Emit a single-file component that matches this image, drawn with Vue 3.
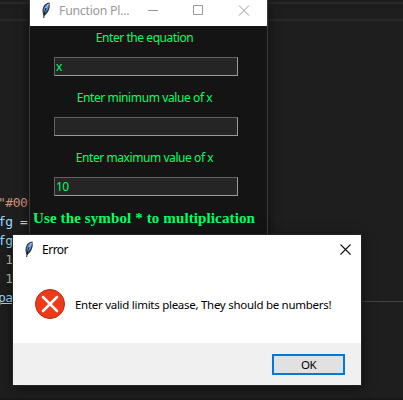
<script setup>
const codeLines = [
  { text: '"#00', kind: 'string', tail: 'f' },
  { text: 'fg ', kind: 'name', tail: '=' },
  { text: 'fg', kind: 'name' },
  { text: ' 1', kind: 'number' },
  { text: ' 1', kind: 'number' },
  { text: 'pa', kind: 'name underlined' },
]
const fields = [
  { label: 'Enter the equation', value: 'x', size: 'short' },
  { label: 'Enter minimum value of x', value: '', size: 'medium' },
  { label: 'Enter maximum value of x', value: '10', size: 'long' },
]
</script>

<template>
  <div class="desktop">
    <div class="rule first"></div>
    <div class="rule second"></div>
    <div class="rule panel"></div>
    <div class="rule bottom"></div>
    <div class="code">
      <div v-for="(line, i) in codeLines" :key="i" class="line" :class="line.kind">{{ line.text }}<span v-if="line.tail" :class="{ operator: line.tail === '=' }">{{ line.tail }}</span></div>
    </div>

    <section class="plotter">
      <header class="plot-head">
        <svg class="feather" width="10" height="17" viewBox="0 0 10 17">
          <path d="M3 14C.4 10 1.5 5 4 2.500Q6 .5 8.500.500Q9.500 5 7.500 9Q6 12 3 14Z" fill="#26303c" />
          <path d="M3 11C2 8 3 5 5 3Q6.500 1.500 8 1.500Q8.200 5 6.500 8Q5 10.500 3 11Z" fill="#5b94dc" />
          <path d="M7.500 2Q4 6 3.200 11" stroke="#b9d5f5" stroke-width=".9" fill="none" />
          <path d="M5 6Q3 10 2.700 16" stroke="#10141a" stroke-width="1" fill="none" />
        </svg>
        <span class="plot-title">Function Pl...</span>
        <svg class="controls" width="104" height="12" viewBox="0 0 104 12" fill="none" stroke="#999">
          <path d="M0 5.500H10M45.500.500H54.500V9.500H45.500ZM91 .500L101 10.500M101 .500L91 10.500" />
        </svg>
      </header>
      <div class="form">
        <div v-for="field in fields" :key="field.label" class="field">
          <div class="label" :class="field.size"><span>{{ field.label }}</span></div>
          <div class="entry">{{ field.value }}</div>
        </div>
        <div class="hint">Use the symbol * to multiplication</div>
      </div>
    </section>

    <section class="dialog">
      <header class="dialog-head">
        <svg class="feather" width="10" height="17" viewBox="0 0 10 17">
          <path d="M3 14C.4 10 1.5 5 4 2.500Q6 .5 8.500.500Q9.500 5 7.500 9Q6 12 3 14Z" fill="#26303c" />
          <path d="M3 11C2 8 3 5 5 3Q6.500 1.500 8 1.500Q8.200 5 6.500 8Q5 10.500 3 11Z" fill="#5b94dc" />
          <path d="M7.500 2Q4 6 3.200 11" stroke="#b9d5f5" stroke-width=".9" fill="none" />
          <path d="M5 6Q3 10 2.700 16" stroke="#10141a" stroke-width="1" fill="none" />
        </svg>
        <span class="dialog-title">Error</span>
        <svg class="close" width="11" height="11" viewBox="0 0 11 11" fill="none" stroke="#111" stroke-width="1.100">
          <path d="M.5.500L10.500 10.500M10.500.500L.5 10.500" />
        </svg>
      </header>
      <div class="message">
        <svg width="30" height="30" viewBox="0 0 30 30">
          <circle cx="15" cy="15" r="14.500" fill="#f03a17" stroke="#a92c1a" />
          <path d="M8 8L22 22M22 8L8 22" stroke="#fff" stroke-width="2.500" stroke-linecap="round" />
        </svg>
        <span class="message-text">Enter valid limits please, They should be numbers!</span>
      </div>
      <footer class="actions"><button class="ok">OK</button></footer>
    </section>
  </div>
</template>

<style>
body { margin: 0; overflow: hidden; background: #1e1e1e; }
</style>

<style scoped>
.desktop {
  position: relative;
  width: 403px;
  height: 400px;
  overflow: hidden;
  background: #1e1e1e;
  font-family: "Noto Sans", sans-serif;
  font-size: 12px;
}
.rule { position: absolute; left: 0; width: 403px; height: 2px; background: #282828; }
.first { top: 2px; }
.second { top: 19px; }
.panel { top: 301px; left: 361px; height: 1px; background: #414141; }
.bottom { top: 398px; background: #181616; }
.code {
  position: absolute;
  left: -2px;
  top: 193px;
  font: 13px/19px "DejaVu Sans Mono", monospace;
  letter-spacing: -0.5px;
  white-space: pre;
}
.line { height: 19px; }
.string { color: #ce9178; }
.name { color: #9cdcfe; }
.number { color: #b5cea8; }
.operator { color: #d4d4d4; }
.underlined { text-decoration: underline; text-decoration-thickness: 1px; text-underline-offset: 1px; }
.plotter {
  position: absolute;
  left: 29px;
  top: 0;
  width: 237px;
  height: 240px;
  border: solid #3b3b3b;
  border-width: 0 1px;
  background: #141414;
  box-shadow: 0 2px 10px #0008;
}
.plot-head {
  box-sizing: border-box;
  display: flex;
  height: 26px;
  padding: 1px 0 0 11px;
  background: #fff;
}
.plot-title { width: 83px; margin-left: 8px; line-height: 20px; color: #999; letter-spacing: -0.25px; font-size: 12.3px; white-space: nowrap; }
.feather { margin-top: 1px; }
.controls { margin: 4px 0 0 6px; }
.form { color: #00ff66; }
.field { height: 60px; }
.label { height: 31px; line-height: 23px; text-align: center; white-space: nowrap; }
.label span { margin-right: 8px; }
.short { letter-spacing: -0.44px; }
.medium { letter-spacing: -0.4px; }
.long { letter-spacing: -0.43px; }
.entry {
  box-sizing: border-box;
  width: 184px;
  height: 19px;
  margin-left: 24px;
  padding-left: 1px;
  border: 1px solid #606060;
  border-right-color: #999;
  border-bottom-color: #999;
  background: #252525;
  line-height: 18px;
  letter-spacing: -0.6px;
}
.hint {
  padding-left: 3px;
  font: bold 15px/24px "Liberation Serif", serif;
  letter-spacing: 0.12px;
  white-space: nowrap;
}
.dialog {
  position: absolute;
  left: 13px;
  top: 235px;
  width: 348px;
  height: 150px;
  background: #fff;
  color: #000;
  box-shadow: 0 0 0 1px #242424, 0 3px 12px #0009;
}
.dialog-head { display: flex; height: 50px; padding: 5px 10px 0 11px; box-sizing: border-box; }
.dialog-title { flex: 1; margin-left: 8px; line-height: 19px; letter-spacing: -0.5px; }
.close { margin: 4px 0 0; }
.message { display: flex; align-items: center; height: 38px; padding: 0 0 20px 22px; }
.message-text { margin-left: 10px; font-size: 11.5px; letter-spacing: -0.28px; white-space: nowrap; }
.actions {
  box-sizing: border-box;
  display: flex;
  justify-content: flex-end;
  height: 42px;
  padding: 11px 16px 0 0;
  background: #f0f0f0;
}
.ok {
  box-sizing: border-box;
  width: 73px;
  height: 21px;
  padding: 0;
  border: 2px solid #0078d7;
  background: #e1e1e1;
  color: #000;
  font: 11.5px/17px "Noto Sans", sans-serif;
  letter-spacing: -0.6px;
}
</style>
